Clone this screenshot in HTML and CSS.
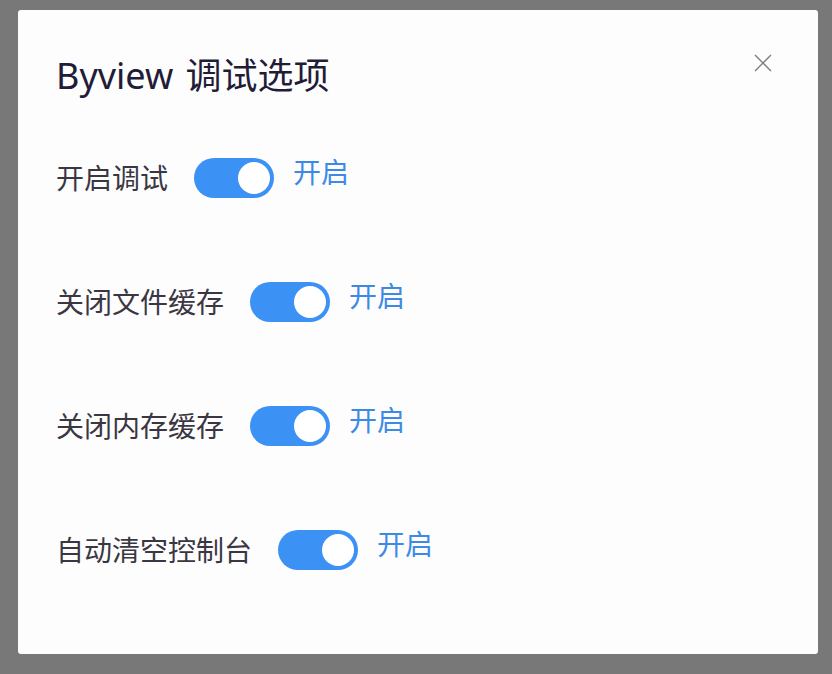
FILE: index.html
```html
<!DOCTYPE html>
<html lang="zh-CN">
<head>
<meta charset="utf-8">
<title>Byview 调试选项</title>
<link rel="stylesheet" href="styles.css">
</head>
<body>
<div class="dialog">
  <div class="header">
    <h1 class="title">Byview 调试选项</h1>
    <button class="close" aria-label="关闭">
      <svg width="18" height="18" viewBox="0 0 18 18"><path d="M1 1L17 17M17 1L1 17" stroke="#7d7d85" stroke-width="1.4" fill="none"/></svg>
    </button>
  </div>
  <div class="options">
    <div class="row">
      <span class="label">开启调试</span>
      <span class="switch"><span class="knob"></span></span>
      <span class="state">开启</span>
    </div>
    <div class="row">
      <span class="label">关闭文件缓存</span>
      <span class="switch"><span class="knob"></span></span>
      <span class="state">开启</span>
    </div>
    <div class="row">
      <span class="label">关闭内存缓存</span>
      <span class="switch"><span class="knob"></span></span>
      <span class="state">开启</span>
    </div>
    <div class="row">
      <span class="label">自动清空控制台</span>
      <span class="switch"><span class="knob"></span></span>
      <span class="state">开启</span>
    </div>
  </div>
</div>
</body>
</html>
```
FILE: styles.css
```css
html, body {
  margin: 0;
  padding: 0;
  background: #787878;
  width: 832px;
  height: 674px;
  overflow: hidden;
}
body {
  padding: 10px 0 0 18px;
  box-sizing: border-box;
  font-family: "Noto Sans", "Noto Sans CJK SC", sans-serif;
}
.dialog {
  width: 800px;
  height: 644px;
  background: #fdfdfe;
  border-radius: 3px;
  box-sizing: border-box;
  padding: 0 39px 0 38px;
}
.header {
  display: flex;
  justify-content: space-between;
  align-items: flex-start;
  padding-top: 44px;
}
.title {
  margin: 0;
  font-size: 36px;
  line-height: 44px;
  font-weight: 400;
  color: #221c36;
  word-spacing: 3px;
}
.close {
  margin-top: -7px;
  width: 32px;
  height: 32px;
  padding: 0;
  border: 0;
  background: transparent;
  display: flex;
  align-items: center;
  justify-content: center;
}
.options {
  display: flex;
  flex-direction: column;
  gap: 84px;
  margin-top: 60px;
}
.row {
  display: flex;
  align-items: center;
  height: 40px;
}
.label {
  font-size: 28px;
  color: #3a3742;
  margin-right: 26px;
  line-height: 40px;
}
.switch {
  width: 80px;
  height: 40px;
  border-radius: 20px;
  background: #3b91f4;
  display: flex;
  justify-content: flex-end;
  align-items: center;
  padding: 0 4px;
  box-sizing: border-box;
}
.knob {
  width: 32px;
  height: 32px;
  border-radius: 50%;
  background: #ffffff;
}
.state {
  font-size: 28px;
  color: #3d8ae6;
  margin-left: 19px;
  line-height: 40px;
  margin-bottom: 12px;
}
```
